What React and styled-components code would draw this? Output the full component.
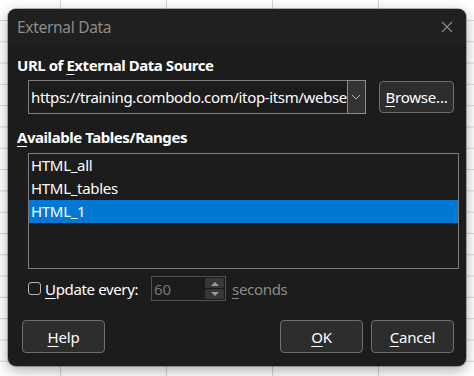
import React from "react";
import styled, { createGlobalStyle } from "styled-components";

const GlobalStyle = createGlobalStyle`
  html, body {
    margin: 0;
    padding: 0;
  }
  body {
    width: 474px;
    height: 376px;
    overflow: hidden;
    background-color: #ffffff;
    background-image:
      linear-gradient(to right, #d6d6d6 1px, transparent 1px),
      linear-gradient(to bottom, #d6d6d6 1px, transparent 1px);
    background-size: 106px 21.3px;
    background-position: 60px 20px;
    font-family: "Noto Sans", "Open Sans", sans-serif;
  }
`;

const Page = styled.div`
  padding: 9px 0 0 8px;
`;

const Dialog = styled.div`
  width: 458px;
  height: 357px;
  background: #1c1c1c;
  border-radius: 8px;
  box-shadow: 0 4px 14px rgba(0, 0, 0, 0.35), 0 0 0 1px rgba(0, 0, 0, 0.25);
  overflow: hidden;
  display: flex;
  flex-direction: column;
  color: #ffffff;
  font-size: 15px;
`;

const TitleBar = styled.div`
  height: 36px;
  background: #202020;
  display: flex;
  align-items: center;
  justify-content: space-between;
  padding: 0 13px 0 9px;
  flex-shrink: 0;
`;

const Title = styled.span`
  color: #8c8c8c;
  font-size: 15.5px;
  letter-spacing: -0.3px;
`;

const Body = styled.div`
  padding: 10px 12px 0 9px;
  display: flex;
  flex-direction: column;
`;

const SectionLabel = styled.div`
  font-weight: 700;
  line-height: 20px;
  letter-spacing: -0.45px;
  margin-top: ${(p) => p.$top || 0}px;
`;

const Key = styled.span`
  text-decoration: underline;
  text-underline-offset: 3px;
  text-decoration-thickness: 1px;
`;

const UrlRow = styled.div`
  display: flex;
  align-items: center;
  margin: 5px 0 0 11px;
`;

const Combo = styled.div`
  width: 338px;
  height: 34px;
  box-sizing: border-box;
  border: 1px solid #7d7d7d;
  display: flex;
  align-items: stretch;
`;

const ComboText = styled.div`
  flex: 1;
  white-space: nowrap;
  padding-left: 2px;
  line-height: 32px;
  letter-spacing: -0.35px;
`;

const ComboButton = styled.div`
  width: 19px;
  background: #333333;
  border: 1px solid #8c8c8c;
  margin: -1px -1px -1px 0;
  display: flex;
  align-items: center;
  justify-content: center;
`;

const Button = styled.button`
  width: ${(p) => p.$w || 83}px;
  height: ${(p) => p.$h || 33}px;
  margin-left: ${(p) => p.$left || 0}px;
  box-sizing: border-box;
  background: #2d2d2d;
  border: 1px solid #6e6e6e;
  border-radius: 4px;
  color: #ffffff;
  font-family: inherit;
  font-size: 15px;
  padding: 0;
  letter-spacing: -0.2px;
`;

const ListBox = styled.div`
  margin: 6px 0 0 11px;
  width: 431px;
  height: 116px;
  box-sizing: border-box;
  border: 1px solid #7d7d7d;
  display: flex;
  flex-direction: column;
`;

const ListItem = styled.div`
  height: 23px;
  line-height: 23px;
  padding-left: 2px;
  background: ${(p) => (p.$selected ? "#0078d4" : "transparent")};
  letter-spacing: -0.3px;
`;

const OptionsRow = styled.div`
  display: flex;
  align-items: center;
  margin: 7px 0 0 11px;
  height: 25px;
`;

const CheckBox = styled.span`
  width: 13px;
  height: 13px;
  box-sizing: border-box;
  border: 1px solid #b5b5b5;
  border-radius: 3px;
  margin-right: 4px;
`;

const OptionLabel = styled.span`
  letter-spacing: -0.35px;
  width: 106px;
`;

const SpinField = styled.div`
  width: 75px;
  height: 25px;
  box-sizing: border-box;
  border: 1px solid #505050;
  display: flex;
  align-items: center;
  justify-content: space-between;
  padding: 0 1px 0 2px;
`;

const SpinValue = styled.span`
  color: #767676;
`;

const SpinButtons = styled.div`
  display: flex;
  flex-direction: column;
  gap: 1px;
`;

const SpinButton = styled.div`
  width: 19px;
  height: 10px;
  border-radius: 2px;
  background: #373737;
  display: flex;
  align-items: center;
  justify-content: center;
`;

const Disabled = styled.span`
  color: #8a8a8a;
  margin-left: 6px;
  letter-spacing: -0.3px;
`;

const ButtonRow = styled.div`
  display: flex;
  align-items: center;
  margin: 19px 0 0 5px;
`;

const Spacer = styled.div`
  flex: 1;
`;

const CloseIcon = () => (
  <svg width="12" height="12" viewBox="0 0 12 12">
    <path d="M1 1 L11 11 M11 1 L1 11" stroke="#8c8c8c" strokeWidth="1.1" />
  </svg>
);

const Chevron = () => (
  <svg width="10" height="6" viewBox="0 0 10 6">
    <path d="M1 1 L5 5 L9 1" stroke="#b0b0b0" strokeWidth="1" fill="none" />
  </svg>
);

const Arrow = ({ up }) => (
  <svg width="8" height="5" viewBox="0 0 8 5">
    <path d={up ? "M0 5 L4 1 L8 5 Z" : "M0 0 L4 4 L8 0 Z"} fill="#9a9a9a" />
  </svg>
);

export default function App() {
  return (
    <>
      <GlobalStyle />
      <Page>
        <Dialog>
          <TitleBar>
            <Title>External Data</Title>
            <CloseIcon />
          </TitleBar>
          <Body>
            <SectionLabel>
              URL of <Key>E</Key>xternal Data Source
            </SectionLabel>
            <UrlRow>
              <Combo>
                <ComboText>https://training.combodo.com/itop-itsm/webse</ComboText>
                <ComboButton>
                  <Chevron />
                </ComboButton>
              </Combo>
              <Button $w={80} $h={32} $left={13}>
                <Key>B</Key>rowse...
              </Button>
            </UrlRow>
            <SectionLabel $top={13}>
              <Key>A</Key>vailable Tables/Ranges
            </SectionLabel>
            <ListBox>
              <ListItem>HTML_all</ListItem>
              <ListItem>HTML_tables</ListItem>
              <ListItem $selected>HTML_1</ListItem>
            </ListBox>
            <OptionsRow>
              <CheckBox />
              <OptionLabel>
                <Key>U</Key>pdate every:
              </OptionLabel>
              <SpinField>
                <SpinValue>60</SpinValue>
                <SpinButtons>
                  <SpinButton>
                    <Arrow up />
                  </SpinButton>
                  <SpinButton>
                    <Arrow />
                  </SpinButton>
                </SpinButtons>
              </SpinField>
              <Disabled>
                <Key>s</Key>econds
              </Disabled>
            </OptionsRow>
            <ButtonRow>
              <Button>
                <Key>H</Key>elp
              </Button>
              <Spacer />
              <Button>
                <Key>O</Key>K
              </Button>
              <Button $left={8}>
                <Key>C</Key>ancel
              </Button>
            </ButtonRow>
          </Body>
        </Dialog>
      </Page>
    </>
  );
}
